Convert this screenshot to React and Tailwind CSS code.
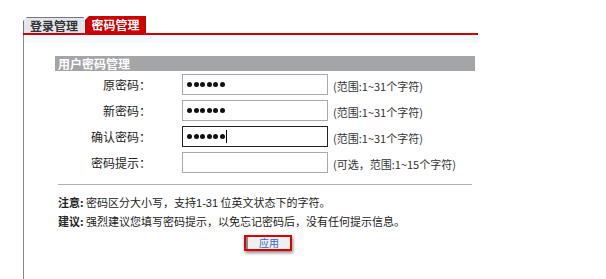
import React from "react";

export default function App() {
  // password rows
  const rows = [
    { label: "原密码：", value: "123456", hint: "(范围:1~31个字符)" },
    { label: "新密码：", value: "123456", hint: "(范围:1~31个字符)" },
    { label: "确认密码：", value: "123456", hint: "(范围:1~31个字符)", focus: true },
    { label: "密码提示：", value: "", hint: "(可选，范围:1~15个字符)", text: true },
  ];

  return (
    <div className="w-[606px] h-[279px] bg-white overflow-hidden pl-[23px] pt-[16px] text-[#222] font-['SimSun','Noto_Sans_CJK_SC',sans-serif]">

      {/* TABS */}
      <div className="flex items-end h-[17px]">
        <div className="w-[61px] h-[16px] bg-[#e3e7ed] border-l border-t border-[#777] flex items-center justify-center text-[12px] font-bold text-[#333] leading-none [clip-path:polygon(4px_0,100%_0,100%_100%,0_100%,0_4px)]">
          登录管理
        </div>
        <div className="ml-px w-[61px] h-[17px] bg-[#cc0000] flex items-center justify-center text-[12px] font-bold text-white leading-none [clip-path:polygon(4px_0,100%_0,100%_100%,0_100%,0_4px)]">
          密码管理
        </div>
      </div>

      {/* PANEL */}
      <div className="w-[455px] h-[246px] border-t-2 border-[#cc0000] relative">
        <div className="absolute left-0 top-0 bottom-0 w-px bg-[#888]" />
        <div className="h-[8px] bg-[#f5f8fc]" />

        <div className="pl-[32px] pt-[13px]">
          <div className="w-[420px] h-[15px] bg-[#a3a5a7] text-white text-[12px] font-bold leading-[15px] pl-[3px]">
            用户密码管理
          </div>

          <div className="flex flex-col gap-[5px] mt-[3px]">
            {rows.map((r, i) => (
              <div key={i} className="flex items-center h-[21px]">
                <div className="w-[96px] text-right text-[12px] leading-none">{r.label}</div>
                <div
                  className={`ml-[31px] w-[146px] h-[21px] bg-white flex items-center pl-[4px] border ${
                    r.focus ? "border-[#222]" : "border-[#a9a9a9]"
                  }`}
                >
                  {r.value && (
                    <div className="flex gap-[1.5px]">
                      {r.value.split("").map((c, j) => (
                        <span key={j} className="w-[5px] h-[5px] rounded-full bg-[#111]" />
                      ))}
                    </div>
                  )}
                  {r.focus && <span className="w-px h-[13px] bg-black ml-[1px]" />}
                </div>
                <div className="ml-[5px] text-[11px] text-[#333] leading-none mt-[3px]">{r.hint}</div>
              </div>
            ))}
          </div>

          <div className="ml-[3px] mt-[11px] w-[414px] h-px bg-[#b0b0b0]" />

          <div className="ml-[3px] mt-[8px] text-[11px] leading-[18px] text-[#222]">
            <div>
              <b>注意:</b> 密码区分大小写，支持<span className="font-['Liberation_Sans',sans-serif]">1-31</span> 位英文状态下的字符。
            </div>
            <div>
              <b>建议:</b> 强烈建议您填写密码提示，以免忘记密码后，没有任何提示信息。
            </div>
          </div>

          <div className="flex justify-center w-[420px] mt-[5px] pl-[6px]">
            <div className="border-2 border-[#dd0000] shadow-[1px_2px_3px_rgba(0,0,0,0.45)]">
              <div className="w-[44px] h-[12px] bg-[#eef0f2] border-l-2 border-[#888] flex items-center justify-center text-[10px] text-[#3366cc] leading-none">
                应用
              </div>
            </div>
          </div>
        </div>
      </div>
    </div>
  );
}
